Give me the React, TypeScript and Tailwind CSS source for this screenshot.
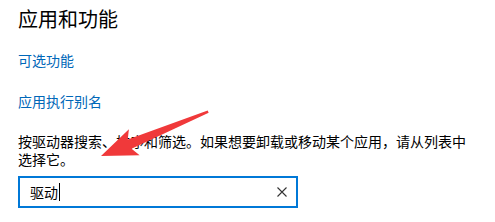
import React from "react";

const font = { fontFamily: '"Noto Sans CJK SC", "Microsoft YaHei", sans-serif' };

function Arrow() {
  // red annotation arrow drawn over the text
  return (
    <svg className="pointer-events-none absolute left-0 top-0" width="495" height="222">
      <g transform="translate(101 156) rotate(-22.5)">
        <polygon
          points="0,0 36,-14 31,-5 116,-1.3 116,1.3 31,5 36,14"
          fill="#f0393a"
        />
      </g>
    </svg>
  );
}

export default function App() {
  return (
    <div className="relative h-[222px] w-[495px] overflow-hidden bg-white text-black" style={font}>
      <div className="pl-[18px] pt-[5px]">
        <h1 className="text-[20px] leading-[28px] font-normal">应用和功能</h1>

        <div className="mt-[17px] text-[14px] leading-[20px] text-[#0067b8]">可选功能</div>
        <div className="mt-[21px] text-[14px] leading-[20px] text-[#0067b8]">应用执行别名</div>

        <p className="mt-[21px] w-[460px] text-[14px] leading-[18px]">
          按驱动器搜索、排序和筛选。如果想要卸载或移动某个应用，请从列表中选择它。
        </p>

        <div className="mt-[8px] flex h-[32px] w-[280px] items-center border-2 border-[#0078d7] pl-[10px] pr-[8px]">
          <span className="text-[14px] leading-[20px]">驱动</span>
          <span className="ml-[1px] h-[18px] w-px bg-black" />
          <span className="flex-1" />
          <svg width="12" height="12" viewBox="0 0 12 12">
            <path d="M1.5 1.5 L10.5 10.5 M10.5 1.5 L1.5 10.5" stroke="#333" strokeWidth="1.1" />
          </svg>
        </div>
      </div>
      <Arrow />
    </div>
  );
}
